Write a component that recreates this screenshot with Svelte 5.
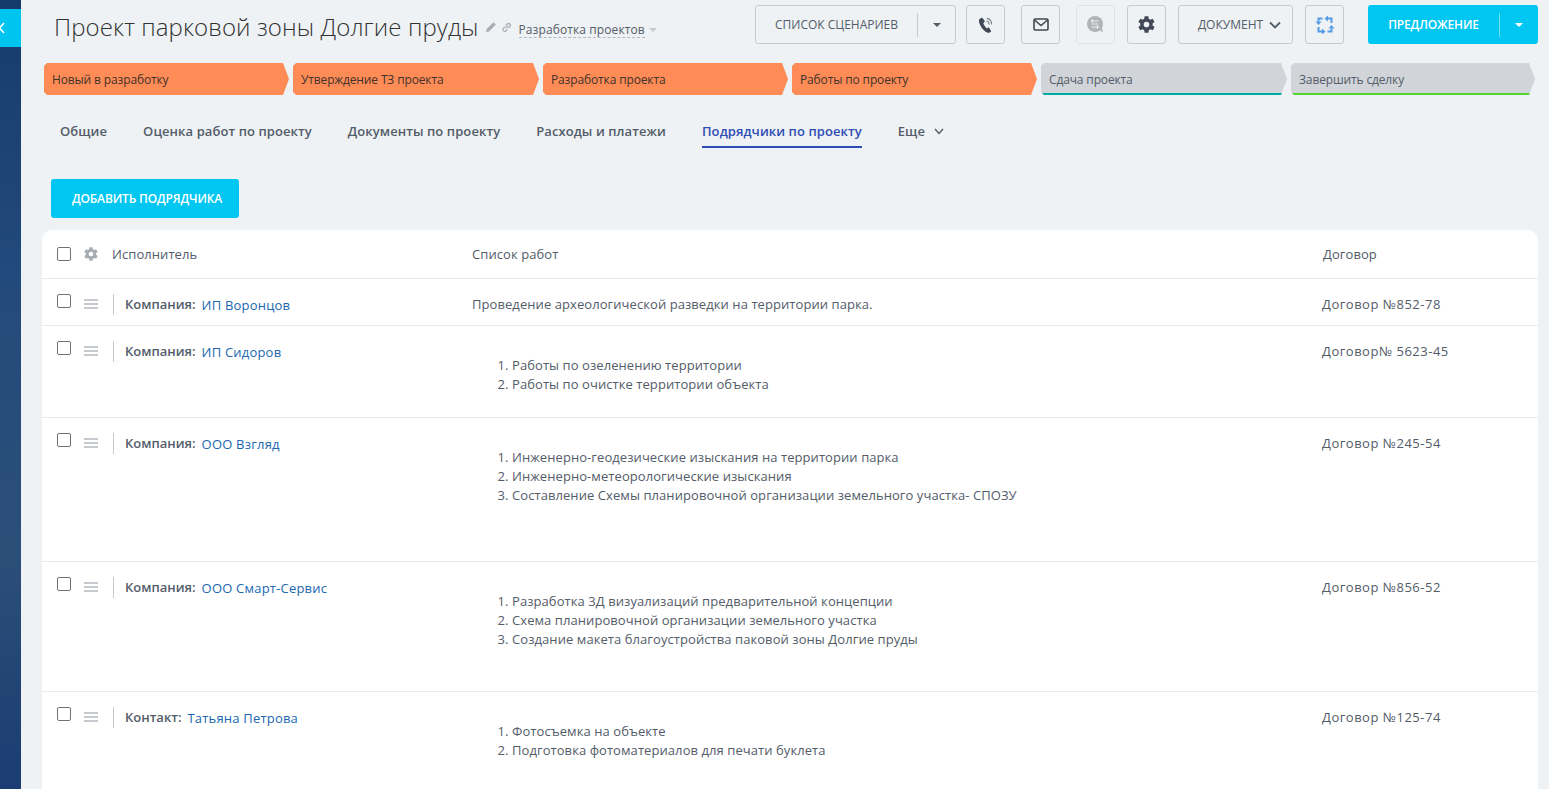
<script>
  const stages = [
    { t: 'Новый в разработку', w: 245, c: 'done' },
    { t: 'Утверждение ТЗ проекта', w: 246, c: 'done' },
    { t: 'Разработка проекта', w: 245, c: 'done' },
    { t: 'Работы по проекту', w: 245, c: 'done' },
    { t: 'Сдача проекта', w: 246, c: 'grey teal' },
    { t: 'Завершить сделку', w: 244, c: 'grey green' }
  ];
  const tabs = ['Общие', 'Оценка работ по проекту', 'Документы по проекту', 'Расходы и платежи', 'Подрядчики по проекту'];
  const rows = [
    { k: 'Компания:', n: 'ИП Воронцов', text: 'Проведение археологической разведки на территории парка.', d: 'Договор №852-78', h: 47 },
    { k: 'Компания:', n: 'ИП Сидоров', list: ['Работы по озеленению территории', 'Работы по очистке территории объекта'], d: 'Договор№ 5623-45', h: 92 },
    { k: 'Компания:', n: 'ООО Взгляд', list: ['Инженерно-геодезические изыскания на территории парка', 'Инженерно-метеорологические изыскания', 'Составление Схемы планировочной организации земельного участка- СПОЗУ'], d: 'Договор №245-54', h: 144 },
    { k: 'Компания:', n: 'ООО Смарт-Сервис', list: ['Разработка 3Д визуализаций предварительной концепции', 'Схема планировочной организации земельного участка', 'Создание макета благоустройства паковой зоны Долгие пруды'], d: 'Договор №856-52', h: 130 },
    { k: 'Контакт:', n: 'Татьяна Петрова', list: ['Фотосъемка на объекте', 'Подготовка фотоматериалов для печати буклета'], d: 'Договор №125-74', h: 98 }
  ];
  const gear = 'M19.4 13a7.5 7.5 0 0 0 0-2l2.100-1.600-2-3.400-2.500 1a7.500 7.500 0 0 0-1.700-1L15 3.300h-4l-.4 2.700a7.500 7.500 0 0 0-1.700 1l-2.500-1-2 3.400L6.500 11a7.500 7.500 0 0 0 0 2l-2.100 1.600 2 3.400 2.500-1a7.500 7.500 0 0 0 1.700 1l.4 2.700h4l.4-2.700a7.500 7.500 0 0 0 1.700-1l2.500 1 2-3.400zM13 15a3 3 0 1 1 0-6 3 3 0 0 1 0 6z';
</script>

<div class="page">
  <aside class="rail">
    <div class="rail-tab">
      <svg width="8" height="12" viewBox="0 0 8 12"><path d="M6 1 1.500 6 6 11" fill="none" stroke="#fff" stroke-width="1.600"/></svg>
    </div>
  </aside>
  <main class="main">
    <header class="top">
      <h1>Проект парковой зоны Долгие пруды</h1>
      <svg class="mini" width="12" height="12" viewBox="0 0 12 12"><path d="M1 11l.6-3L8.500 1.200l2.300 2.300L4 10.400z" fill="#a9adb3"/></svg>
      <svg class="mini link" width="11" height="11" viewBox="0 0 12 12"><path d="M5 7l3-3M4.200 5.200 2.500 7a2 2 0 0 0 2.800 2.800L7 8M5 3.800 6.800 2.200A2 2 0 0 1 9.700 5L8 6.700" fill="none" stroke="#a9adb3" stroke-width="1.300"/></svg>
      <span class="category">Разработка проектов</span>
      <i class="cat-caret"></i>
      <div class="actions">
        <button class="btn scen"><span class="scen-l">СПИСОК СЦЕНАРИЕВ</span><span class="scen-r"><i class="caret"></i></span></button>
        <button class="btn sq phone" aria-label="Телефон">
          <svg width="18" height="18" viewBox="0 0 18 18"><path d="M4.300 2 2.300 3.300C1.300 5.300 2.500 8.700 4.700 11.700c2.200 3 5 5.200 7.200 5.300l1.800-1.300c.5-.4.500-.9.200-1.300l-1.700-2.400c-.3-.4-.8-.6-1.300-.3l-1.300.7C9.200 11.800 8.300 10.900 7.600 9.800 6.900 8.700 6.300 7.600 6.300 6.900l1.100-.9c.4-.3.600-.8.300-1.300L5.600 2.300c-.3-.5-.9-.6-1.300-.3z" fill="#3f4854"/><path d="M9.500 5a3.500 3.500 0 0 1 2.700 3.600M9.800 2.400a6 6 0 0 1 4.800 6.100" fill="none" stroke="#78818c" stroke-width="1.100"/></svg>
        </button>
        <button class="btn sq mail" aria-label="Почта">
          <svg width="16" height="13" viewBox="0 0 16 13"><rect x="1" y="1" width="14" height="11" rx="1.200" fill="none" stroke="#3f4854" stroke-width="1.600"/><path d="M1.500 2 8 7.500 14.500 2" fill="none" stroke="#3f4854" stroke-width="1.600"/></svg>
        </button>
        <button class="btn sq off chat" aria-label="Чат">
          <svg width="17" height="17" viewBox="0 0 17 17"><circle cx="8" cy="8" r="8" fill="#b1b4b7"/><path d="M11 13l5 3.500-1.500-6z" fill="#b1b4b7"/><path d="M4.500 5h7M6 3.500 4.500 5 6 6.500M4.500 8h7M4.500 11h7M10 9.500 11.500 11 10 12.500" stroke="#e9ebec" stroke-width="1.100" fill="none"/></svg>
        </button>
        <button class="btn sq set" aria-label="Настройки">
          <svg width="17" height="17" viewBox="4 3 18 18"><path d={gear} fill="#3f4854"/></svg>
        </button>
        <button class="btn doc">ДОКУМЕНТ
          <svg width="12" height="8" viewBox="0 0 12 8"><path d="M1 1.500 6 6.500 11 1.500" fill="none" stroke="#535c69" stroke-width="1.800"/></svg>
        </button>
        <button class="btn sq sync" aria-label="Синхронизация">
          <svg width="20" height="18" viewBox="0 0 20 18"><g fill="none" stroke="#559be6" stroke-width="2"><path d="M7.500 2.500H3.500V5.500M12.500 2.500H16.500V7M12.500 15.500H16.500V12.500M7.500 15.500H3.500V11"/></g><g fill="#559be6"><path d="M.5 5.500h6L3.500 9zM13 -.5v6L9.500 2.500zM19.500 12.500h-6L16.500 9zM7 18.500v-6L10.500 15.500z"/></g></svg>
        </button>
        <button class="btn primary"><span class="pr-l">ПРЕДЛОЖЕНИЕ</span><span class="pr-r"><i class="caret white"></i></span></button>
      </div>
    </header>

    <div class="stages">
      {#each stages as s}
        <div class="stage {s.c}" style="width:{s.w}px"><span>{s.t}</span></div>
      {/each}
    </div>

    <nav class="tabs">
      {#each tabs as t, i}
        <span class="tab" class:active={i === 4}>{t}</span>
      {/each}
      <span class="tab more">Еще
        <svg width="10" height="7" viewBox="0 0 10 7"><path d="M1 1 5 5.500 9 1" fill="none" stroke="#535c69" stroke-width="1.400"/></svg>
      </span>
    </nav>

    <button class="add">ДОБАВИТЬ ПОДРЯДЧИКА</button>

    <section class="card">
      <div class="row head">
        <div class="cell first">
          <span class="check"></span>
          <svg class="hgear" width="14" height="14" viewBox="4 3 18 18"><path d={gear} fill="#a8adb4"/></svg>
          <span class="hname">Исполнитель</span>
        </div>
        <div>Список работ</div>
        <div class="hdeal">Договор</div>
      </div>
      {#each rows as r}
        <div class="row" style="height:{r.h}px">
          <div class="cell first top-cell">
            <span class="check"></span>
            <span class="drag"><i></i><i></i><i></i></span>
            <span class="sep"></span>
            <b>{r.k}</b>
            <a href="#top" onclick={(e) => e.preventDefault()}>{r.n}</a>
          </div>
          <div class="work">
            {#if r.text}{r.text}{:else}
              <ol>{#each r.list as l}<li>{l}</li>{/each}</ol>
            {/if}
          </div>
          <div class="deal">{r.d}</div>
        </div>
      {/each}
    </section>
  </main>
</div>

<style>
  :global(body) { margin: 0; background: #eef2f4; overflow: hidden; }
  .page { display: flex; height: 789px; overflow: hidden; font-family: "Open Sans", "Noto Sans", sans-serif; font-size: 13px; color: #535c69; letter-spacing: .07px; }
  .rail { width: 21px; flex: none; background: linear-gradient(180deg, #163a6c 0%, #234a7c 35%, #2c4f78 70%, #1b3c72 100%); padding-top: 9px; box-sizing: border-box; }
  .rail-tab { height: 38px; background: #00c4f0; display: flex; align-items: center; }
  .rail-tab svg { margin-left: -2px; }
  .main { flex: 1; min-width: 0; }
  .top { display: flex; align-items: center; height: 49px; padding: 5px 11px 0 33px; box-sizing: border-box; }
  h1 { margin: 0; font-size: 24px; font-weight: 300; color: #333; white-space: nowrap; line-height: 34px; letter-spacing: .09px; }
  .mini { margin-left: 6px; }
  .link { margin-left: 4px; }
  .category { margin-left: 7px; font-size: 12px; color: #535c69; border-bottom: 1px dashed #b5b9bf; line-height: 15px; margin-top: 5px; letter-spacing: .1px; }
  .cat-caret { margin: 5px 0 0 4px; border: 4px solid transparent; border-top-color: #c6cace; border-bottom: 0; }
  .actions { margin-left: auto; display: flex; align-items: center; margin-top: -5px; }
  .btn { height: 39px; box-sizing: border-box; border: 1px solid #c6cbd0; border-radius: 3px; background: transparent; font: 400 12px "Open Sans", sans-serif; color: #535c69; padding: 0; display: flex; align-items: center; justify-content: center; }
  .sq { width: 39px; }
  .scen { width: 201px; justify-content: flex-start; }
  .scen-l { width: 161px; text-align: center; }
  .scen-r { border-left: 1px solid #c6cbd0; height: 24px; flex: 1; display: flex; align-items: center; justify-content: center; }
  .caret { border: 4px solid transparent; border-top-color: #535c69; border-bottom: 0; }
  .caret.white { border-top-color: #fff; }
  .phone { margin-left: 10px; }
  .mail { margin-left: 16px; }
  .chat { margin-left: 16px; }
  .off { border-color: #e0e3e6; }
  .set { margin-left: 12px; }
  .doc { width: 115px; margin-left: 12px; gap: 6px; padding-left: 8px; }
  .sync { margin-left: 12px; }
  .primary { width: 170px; margin-left: 24px; background: #00c6f2; border: 0; color: #fff; font-weight: 600; justify-content: flex-start; letter-spacing: -.15px; }
  .pr-l { width: 131px; text-align: center; }
  .pr-r { border-left: 1px solid rgba(255,255,255,.45); height: 24px; flex: 1; display: flex; align-items: center; justify-content: center; }

  .stages { display: flex; gap: 4px; margin: 14px 0 0 23px; height: 32px; }
  .stage { box-sizing: border-box; height: 32px; background: #ff8c56; color: #40322c; font-size: 12px; font-weight: 400; line-height: 33px; padding-left: 8px; clip-path: polygon(3px 0, calc(100% - 6px) 0, 100% 50%, calc(100% - 6px) 100%, 3px 100%, 0 calc(100% - 3px), 0 3px); position: relative; letter-spacing: -.14px; }
  .stage.grey { background: #d1d4d8; color: #535c69; }
  .stage.teal { box-shadow: inset 0 -2px 0 #00a9a3; }
  .stage.green { box-shadow: inset 0 -2px 0 #53d533; }

  .tabs { display: flex; gap: 36px; margin: 20px 0 0 39px; height: 33px; letter-spacing: .08px; }
  .tab { height: 33px; line-height: 33px; font-weight: 600; box-sizing: border-box; font-size: 13px; }
  .tab.active { color: #2d4cb4; border-bottom: 2px solid #2d4cb4; }
  .tab.more svg { margin-left: 6px; vertical-align: 1px; }

  .add { display: block; margin: 31px 0 0 30px; width: 188px; height: 39px; border: 0; border-radius: 3px; background: #00c6f2; color: #fff; font: 600 12px "Open Sans", sans-serif; padding: 0 0 0 4px; letter-spacing: -.15px; }

  .card { margin: 12px 11px 0 21px; background: #fff; border-radius: 10px 10px 0 0; }
  .row { display: grid; grid-template-columns: 430px 850px 1fr; box-sizing: border-box; border-bottom: 1px solid #e8ebee; }
  .head { height: 49px; align-items: center; }
  .hdeal { padding-left: 1px; }
  .cell { display: flex; align-items: center; padding-left: 15px; }
  .first { min-width: 0; }
  .check { width: 12px; height: 12px; border: 1px solid #6f7377; border-radius: 2px; flex: none; background: #fff; }
  .hgear { margin-left: 13px; }
  .hname { margin-left: 14px; }
  .top-cell { align-items: flex-start; padding-top: 15px; height: 31px; }
  .drag { width: 14px; margin-left: 13px; margin-top: 5px; display: flex; flex-direction: column; gap: 2px; flex: none; }
  .drag i { height: 2px; background: #c6cace; display: block; }
  .sep { width: 1px; height: 21px; background: #c6cace; margin-left: 15px; flex: none; }
  b { margin-left: 11px; font-weight: 600; line-height: 21px; letter-spacing: 0; }
  a { margin-left: 6px; color: #2067b0; text-decoration: none; line-height: 23px; letter-spacing: .2px; }
  .work { padding-top: 15px; line-height: 21px; }
  .deal { padding-top: 15px; line-height: 21px; letter-spacing: .5px; }
  ol { margin: 15px 0 0; padding: 0 0 0 40px; line-height: 19px; }
</style>
